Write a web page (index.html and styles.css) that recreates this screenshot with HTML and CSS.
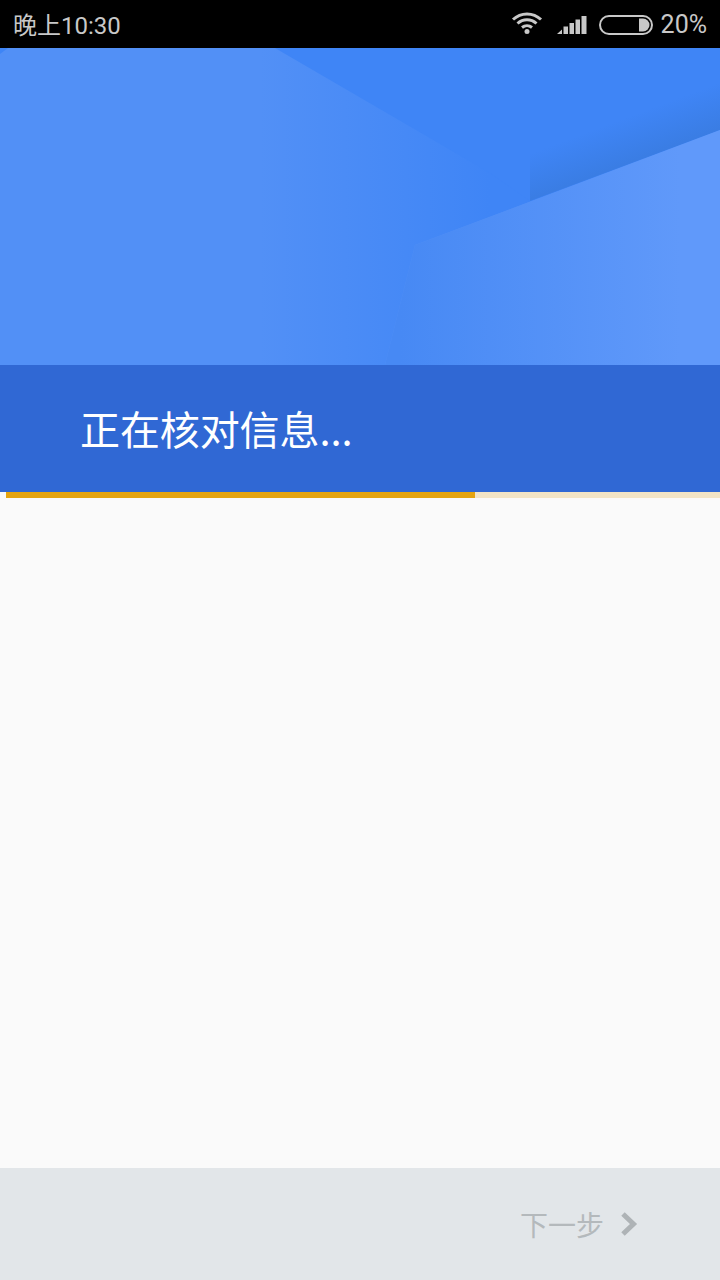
FILE: index.html
```html
<!DOCTYPE html>
<html lang="zh-CN">
  <head>
    <meta charset="UTF-8">
    <meta name="viewport" content="width=device-width, initial-scale=1.0">
    <title>正在核对信息</title>
    <link rel="stylesheet" href="styles.css">
  </head>
  <body>
    <div class="page">
      <div class="statusBar">
        <span class="clock">晚上10:30</span>
        <div class="statusIcons">
          <svg class="wifi" width="32" height="24" viewBox="0 0 32 24">
            <path d="M2 8.500C10 1 22 1 30 8.500" />
            <path d="M6.500 12.500C12 7.500 20 7.500 25.500 12.500" />
            <path d="M11 16.500C14 14 18 14 21 16.500" />
            <circle cx="16" cy="20.500" r="2.500" />
          </svg>
          <svg class="signal" width="30" height="20" viewBox="0 0 30 20">
            <path d="M0 19 L5 14.500 V19 Z" />
            <rect x="6.500" y="11.500" width="4.500" height="7.500" />
            <rect x="12.500" y="8" width="4.500" height="11" />
            <rect x="18.500" y="4.500" width="4.500" height="14.500" />
            <rect x="24.500" y="1" width="5" height="18" />
          </svg>
          <svg class="battery" width="54" height="20" viewBox="0 0 54 20">
            <rect x="1" y="1" width="52" height="18" rx="9" />
            <path class="batteryFill" d="M40 3.500 H44 A6.500 6.500 0 0 1 44 16.500 H40 Z" />
          </svg>
          <span class="percent">20%</span>
        </div>
      </div>

      <div class="hero">
        <svg class="heroArt" viewBox="0 0 720 317" preserveAspectRatio="none">
          <defs>
            <linearGradient id="midFade" x1="260" y1="0" x2="490" y2="0" gradientUnits="userSpaceOnUse">
              <stop offset="0" stop-color="#5290f6" />
              <stop offset="1" stop-color="#3f85f6" />
            </linearGradient>
            <linearGradient id="lightFade" x1="400" y1="0" x2="680" y2="0" gradientUnits="userSpaceOnUse">
              <stop offset="0" stop-color="#4789f4" />
              <stop offset="1" stop-color="#6099fa" />
            </linearGradient>
            <linearGradient id="edgeShade" x1="620" y1="72" x2="635" y2="112" gradientUnits="userSpaceOnUse">
              <stop offset="0" stop-color="#3a7de4" stop-opacity="0" />
              <stop offset="1" stop-color="#3a7de4" />
            </linearGradient>
          </defs>
          <rect width="720" height="317" fill="#5290f6" />
          <polygon points="260,317 260,0 720,0 720,82 415,197 385,317" fill="url(#midFade)" />
          <polygon points="275,0 720,0 720,82 530,153 490,125" fill="#3f85f6" />
          <polygon points="720,30 720,82 530,153 530,100" fill="url(#edgeShade)" />
          <polygon points="720,82 415,197 385,317 720,317" fill="url(#lightFade)" />
          <polygon points="0,0 8,0 0,6" fill="#3e85f6" />
        </svg>
      </div>

      <div class="band">
        <h1 class="title">正在核对信息...</h1>
      </div>

      <div class="progress">
        <div class="progressBar" style="width: 469px"></div>
      </div>

      <div class="content"></div>

      <div class="footer">
        <span class="nextLabel">下一步</span>
        <svg class="nextArrow" width="18" height="26" viewBox="0 0 18 26">
          <path d="M3 3 L13.500 13 L3 23" />
        </svg>
      </div>
    </div>
  </body>
</html>
```

FILE: styles.css
```css
html {
  font-family: "Roboto", "Noto Sans CJK SC", sans-serif;
}

body {
  margin: 0;
  background-color: #fafafa;
}

.page {
  display: flex;
  flex-direction: column;
  width: 720px;
  height: 1280px;
  overflow: hidden;
}

.statusBar {
  display: flex;
  flex: 0 0 48px;
  align-items: center;
  justify-content: space-between;
  padding: 0 13px;
  box-sizing: border-box;
  background-color: #000;
  color: #c8c8c8;
  font-size: 24px;
}

.clock {
  margin-bottom: 2px;
}

.statusIcons {
  display: flex;
  align-items: center;
  padding-top: 1px;
}

.wifi {
  margin-right: 14px;
  margin-top: -3px;
}

.wifi path {
  fill: none;
  stroke: #c8c8c8;
  stroke-width: 3;
}

.wifi circle {
  fill: #c8c8c8;
}

.signal {
  margin-right: 12px;
}

.signal path,
.signal rect {
  fill: #c8c8c8;
}

.battery {
  margin-right: 8px;
}

.battery rect {
  fill: none;
  stroke: #c8c8c8;
  stroke-width: 2;
}

.batteryFill {
  fill: #c8c8c8;
}

.percent {
  font-size: 25px;
  margin-top: -1px;
}

.hero {
  flex: 0 0 317px;
  height: 317px;
}

.heroArt {
  display: block;
  width: 720px;
  height: 317px;
}

.band {
  display: flex;
  flex: 0 0 127px;
  align-items: center;
  padding-left: 80px;
  box-sizing: border-box;
  background-color: #3068d4;
}

.title {
  margin: 0;
  padding-bottom: 2px;
  color: #fff;
  font-size: 40px;
  font-weight: 400;
  letter-spacing: -0.1px;
  font-family: "Noto Sans CJK SC", sans-serif;
}

.progress {
  flex: 0 0 6px;
  margin-left: 6px;
  background-color: #f2e4c6;
}

.progressBar {
  height: 100%;
  background-color: #e5a410;
}

.content {
  flex: 1;
  background-color: #fafafa;
}

.footer {
  display: flex;
  flex: 0 0 112px;
  align-items: center;
  justify-content: flex-end;
  padding-right: 82px;
  box-sizing: border-box;
  background-color: #e2e6e9;
}

.nextLabel {
  color: #b4b9bc;
  font-size: 28px;
  font-family: "Noto Sans CJK SC", sans-serif;
}

.nextArrow {
  margin-left: 16px;
}

.nextArrow path {
  fill: none;
  stroke: #aeb3b6;
  stroke-width: 5;
}
```
